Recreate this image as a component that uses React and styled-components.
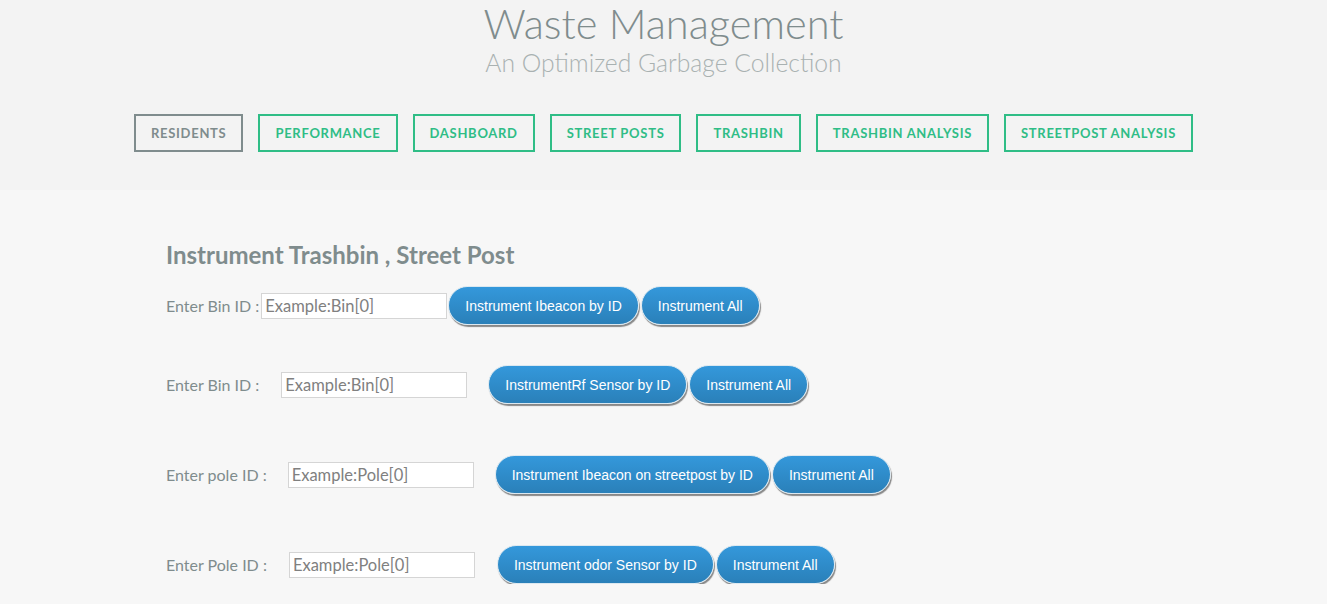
import React from "react";
import styled, { createGlobalStyle } from "styled-components";

const GlobalStyle = createGlobalStyle`
  html, body {
    margin: 0;
    padding: 0;
    background: #f7f7f7;
    font-family: Lato, "Open Sans", sans-serif;
  }
`;

const Header = styled.header`
  background: #f3f3f3;
  height: 190px;
  box-sizing: border-box;
  padding-top: 1px;
  text-align: center;
`;

const Title = styled.h1`
  margin: 0;
  font-weight: 300;
  font-size: 41.6px;
  line-height: 44px;
  color: #7f8c8d;
`;

const Subtitle = styled.h2`
  margin: 0;
  font-weight: 300;
  font-size: 24.7px;
  line-height: 35px;
  color: #a9b1b1;
`;

const Nav = styled.nav`
  display: flex;
  justify-content: center;
  gap: 15px;
  margin-top: 34px;
`;

const NavButton = styled.a`
  display: flex;
  align-items: center;
  height: 38px;
  box-sizing: border-box;
  padding: 0 15px;
  border: 2px solid ${(p) => (p.active ? "#7f8c8d" : "#2fbd86")};
  color: ${(p) => (p.active ? "#7f8c8d" : "#2fbd86")};
  font-size: 13px;
  font-weight: 700;
  letter-spacing: 0.7px;
  text-transform: uppercase;
  text-decoration: none;
  cursor: pointer;
`;

const Main = styled.main`
  padding: 51px 166px 0;
`;

const Heading = styled.h3`
  margin: 0 0 17px;
  font-size: 24px;
  font-weight: 700;
  line-height: 28px;
  color: #7f8c8d;
`;

const Row = styled.div`
  display: flex;
  align-items: center;
  margin-bottom: ${(p) => p.after}px;
`;

const Label = styled.label`
  font-size: 16px;
  color: #7f8c8d;
  margin-right: ${(p) => p.gap}px;
`;

const Input = styled.input`
  width: 186px;
  height: 26px;
  box-sizing: border-box;
  border: 1px solid #d5d5d5;
  background: #fff;
  padding: 0 3px;
  font-family: Lato, sans-serif;
  font-size: 16.5px;
  color: #808080;
  margin-right: ${(p) => p.gap}px;
  &::placeholder {
    color: #808080;
  }
`;

const Pill = styled.button`
  height: 39px;
  box-sizing: border-box;
  padding: 0 16px;
  margin-right: 2px;
  border-radius: 20px;
  border: 1px solid #dbe8f0;
  background: linear-gradient(#3498db, #2a80b9);
  box-shadow: 1px 2px 1px rgba(0, 0, 0, 0.45);
  color: #fff;
  font-family: "Liberation Sans", Arial, sans-serif;
  font-size: 14px;
  cursor: pointer;
`;

const navItems = [
  "Residents",
  "Performance",
  "Dashboard",
  "Street Posts",
  "Trashbin",
  "Trashbin Analysis",
  "Streetpost Analysis",
];

const rows = [
  { label: "Enter Bin ID :", ph: "Example:Bin[0]", btn: "Instrument Ibeacon by ID", lg: 2, ig: 1, after: 40 },
  { label: "Enter Bin ID :", ph: "Example:Bin[0]", btn: "InstrumentRf Sensor by ID", lg: 22, ig: 21, after: 51 },
  { label: "Enter pole ID :", ph: "Example:Pole[0]", btn: "Instrument Ibeacon on streetpost by ID", lg: 21, ig: 21, after: 51 },
  { label: "Enter Pole ID :", ph: "Example:Pole[0]", btn: "Instrument odor Sensor by ID", lg: 22, ig: 22, after: 0 },
];

export default function App() {
  return (
    <>
      <GlobalStyle />
      <Header>
        <Title>Waste Management</Title>
        <Subtitle>An Optimized Garbage Collection</Subtitle>
        <Nav>
          {navItems.map((n, i) => (
            <NavButton key={n} active={i === 0}>
              {n}
            </NavButton>
          ))}
        </Nav>
      </Header>
      <Main>
        <Heading>Instrument Trashbin , Street Post</Heading>
        {rows.map((r, i) => (
          <Row key={i} after={r.after}>
            <Label gap={r.lg}>{r.label}</Label>
            <Input placeholder={r.ph} gap={r.ig} />
            <Pill>{r.btn}</Pill>
            <Pill>Instrument All</Pill>
          </Row>
        ))}
      </Main>
    </>
  );
}
